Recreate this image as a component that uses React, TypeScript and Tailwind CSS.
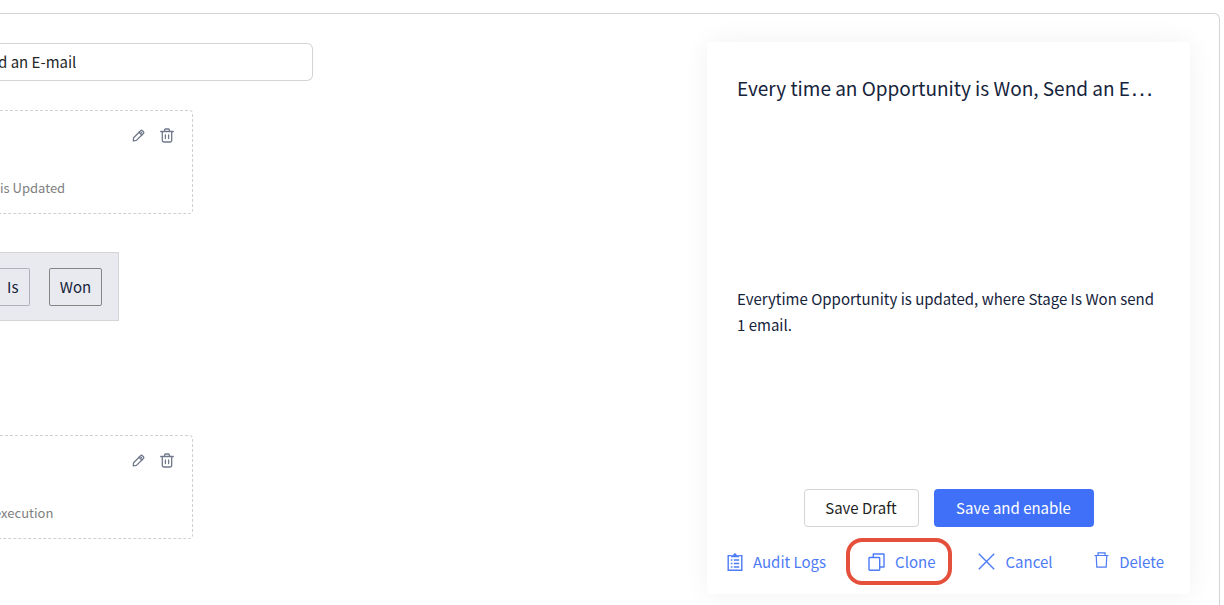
import { ReactNode } from "react";

const PencilIcon = () => (
  <svg width="13" height="13" viewBox="0 0 13 13" fill="none" stroke="currentColor" strokeWidth="1.3" strokeLinejoin="round" strokeLinecap="round">
    <path d="M1.3 11.8 1.6 8.7 8.6 1.7Q9.5.9 10.4 1.7L11.4 2.7Q12.2 3.6 11.4 4.5L4.4 11.4Z" />
    <path d="M7 3.3 9.8 6.1M8.4 4.7 9.6 3.5" />
  </svg>
);

const BinIcon = () => (
  <svg width="14" height="15" viewBox="0 0 14 15" fill="none" stroke="currentColor" strokeWidth="1.3" strokeLinejoin="round" strokeLinecap="round">
    <path d="M.7 3.5H13.3M4.6 3.3V1.9Q4.6 1 5.5 1H8.5Q9.4 1 9.4 1.9V3.3" />
    <path d="M2.3 3.7V12.6Q2.3 14 3.7 14H10.3Q11.7 14 11.7 12.6V3.7M5.4 7V10.5M8.6 7V10.5" />
  </svg>
);

const LogsIcon = () => (
  <svg width="16" height="18" viewBox="0 0 16 18" fill="none" stroke="currentColor" strokeWidth="1.4">
    <path d="M4 2.6H1.2V17.3H14.8V2.6H12" />
    <path d="M4 4.2V2.2H6.2Q6.4.2 8 .2T9.8 2.2H12V4.2Z" fill="currentColor" stroke="none" />
    <path d="M3.8 7H5.4M6.8 7H12.2M3.8 10.5H5.4M6.8 10.5H12.2M3.8 14H5.4M6.8 14H12.2" />
  </svg>
);

const CloneIcon = () => (
  <svg width="17" height="18" viewBox="0 0 17 18" fill="none" stroke="currentColor" strokeWidth="1.4" strokeLinejoin="round">
    <rect x="1" y="4.5" width="10.7" height="12.7" rx=".7" />
    <path d="M5.3 4.3V1H16V14H12" />
  </svg>
);

const CloseIcon = () => (
  <svg width="17" height="17" viewBox="0 0 17 17" fill="none" stroke="currentColor" strokeWidth="1.4">
    <path d="M.8.8 16.2 16.2M16.2.8.8 16.2" />
  </svg>
);

const DeleteIcon = () => (
  <svg width="15" height="16" viewBox="0 0 15 16" fill="none" stroke="currentColor" strokeWidth="1.2" className="-mt-1">
    <path d="M.5 3.5H14.5M4 3.3V.8H11V3.3" />
    <path d="M2.2 3.5 2.8 15.2H12.2L12.8 3.5" />
  </svg>
);

const StepCard = ({ name, children }: { name: string; children: ReactNode }) => (
  <section className="flex h-[104px] w-[193px] flex-col justify-between rounded-r border border-l-0 border-dashed border-[#d0d0d0] pt-[17px] pr-[18px] pb-[15px]">
    <div className="flex items-center justify-end gap-[15px] text-[#70788c]">
      <button type="button" aria-label={`Edit ${name}`}>
        <PencilIcon />
      </button>
      <button type="button" aria-label={`Delete ${name}`}>
        <BinIcon />
      </button>
    </div>
    <p className="text-[13px] leading-5 text-[#808080]">{children}</p>
  </section>
);

const ActionLink = ({ icon, label }: { icon: ReactNode; label: string }) => (
  <button type="button" className="flex items-center gap-[10px] whitespace-nowrap text-[#4d7bf7]">
    {icon}
    <span>{label}</span>
  </button>
);

const App = () => {
  return (
    <div className="flex min-h-screen overflow-hidden bg-white pt-[13px] pr-1 font-['Noto_Sans_CJK_SC',sans-serif] text-[15px] leading-[26px] text-[#15233b]">
      <main className="flex flex-1 items-start justify-between rounded-tr-md border-t border-r border-[#d4d4d4] pt-7 pr-[29px] pb-2">
        <div className="pt-px">
          <input
            type="text"
            aria-label="Name"
            defaultValue="d an E-mail"
            className="block h-[38px] w-[313px] rounded-r-md border border-l-0 border-[#d4d4d4] bg-white pb-0.5 -indent-0.5 text-[#262626] outline-none"
          />

          <div className="mt-[29px]">
            <StepCard name="trigger">is Updated</StepCard>
          </div>

          <div className="mt-[38px] flex h-[69px] w-[119px] items-center justify-between border border-l-0 border-[#d4d4d4] bg-[#e9eaef] pr-4">
            <button type="button" className="h-[38px] w-[30px] rounded-r-xs border border-l-0 border-[#b0b2ba] pl-[7px] text-left">
              Is
            </button>
            <button type="button" className="h-[38px] w-[53px] rounded-xs border border-[#858585]">
              Won
            </button>
          </div>

          <div className="mt-[114px]">
            <StepCard name="action">
              <span className="-ml-1.5">execution</span>
            </StepCard>
          </div>
        </div>

        <aside className="w-[483px] rounded bg-white pt-[30px] pb-[9px] shadow-[0_0_28px_rgba(0,0,0,0.06)]">
          <div className="px-[30px]">
            <h2 className="h-8 text-[19px] leading-8 whitespace-nowrap">
              Every time an Opportunity is Won, Send an E<span className="font-['Liberation_Sans',sans-serif] text-2xl leading-8">…</span>
            </h2>
            <p className="mt-[182px]">Everytime Opportunity is updated, where Stage Is Won send 1 email.</p>
          </div>

          <div className="mt-[151px] flex justify-center gap-[15px]">
            <button type="button" className="h-[38px] w-[115px] rounded border border-[#d4d4d4] text-[#1f1f1f]">
              Save Draft
            </button>
            <button type="button" className="h-[38px] w-40 rounded bg-[#4070f8] text-white">
              Save and enable
            </button>
          </div>

          <div className="mt-[11px] flex items-center justify-between pr-[26px] pl-5">
            <div className="flex items-center gap-5">
              <ActionLink icon={<LogsIcon />} label="Audit Logs" />
              <div className="flex h-[47px] items-center rounded-2xl border-4 border-[#e5503c] pr-[13px] pl-[18px]">
                <ActionLink icon={<CloneIcon />} label="Clone" />
              </div>
              <div className="pl-1.5">
                <ActionLink icon={<CloseIcon />} label="Cancel" />
              </div>
            </div>
            <ActionLink icon={<DeleteIcon />} label="Delete" />
          </div>
        </aside>
      </main>
    </div>
  );
};

export default App;
